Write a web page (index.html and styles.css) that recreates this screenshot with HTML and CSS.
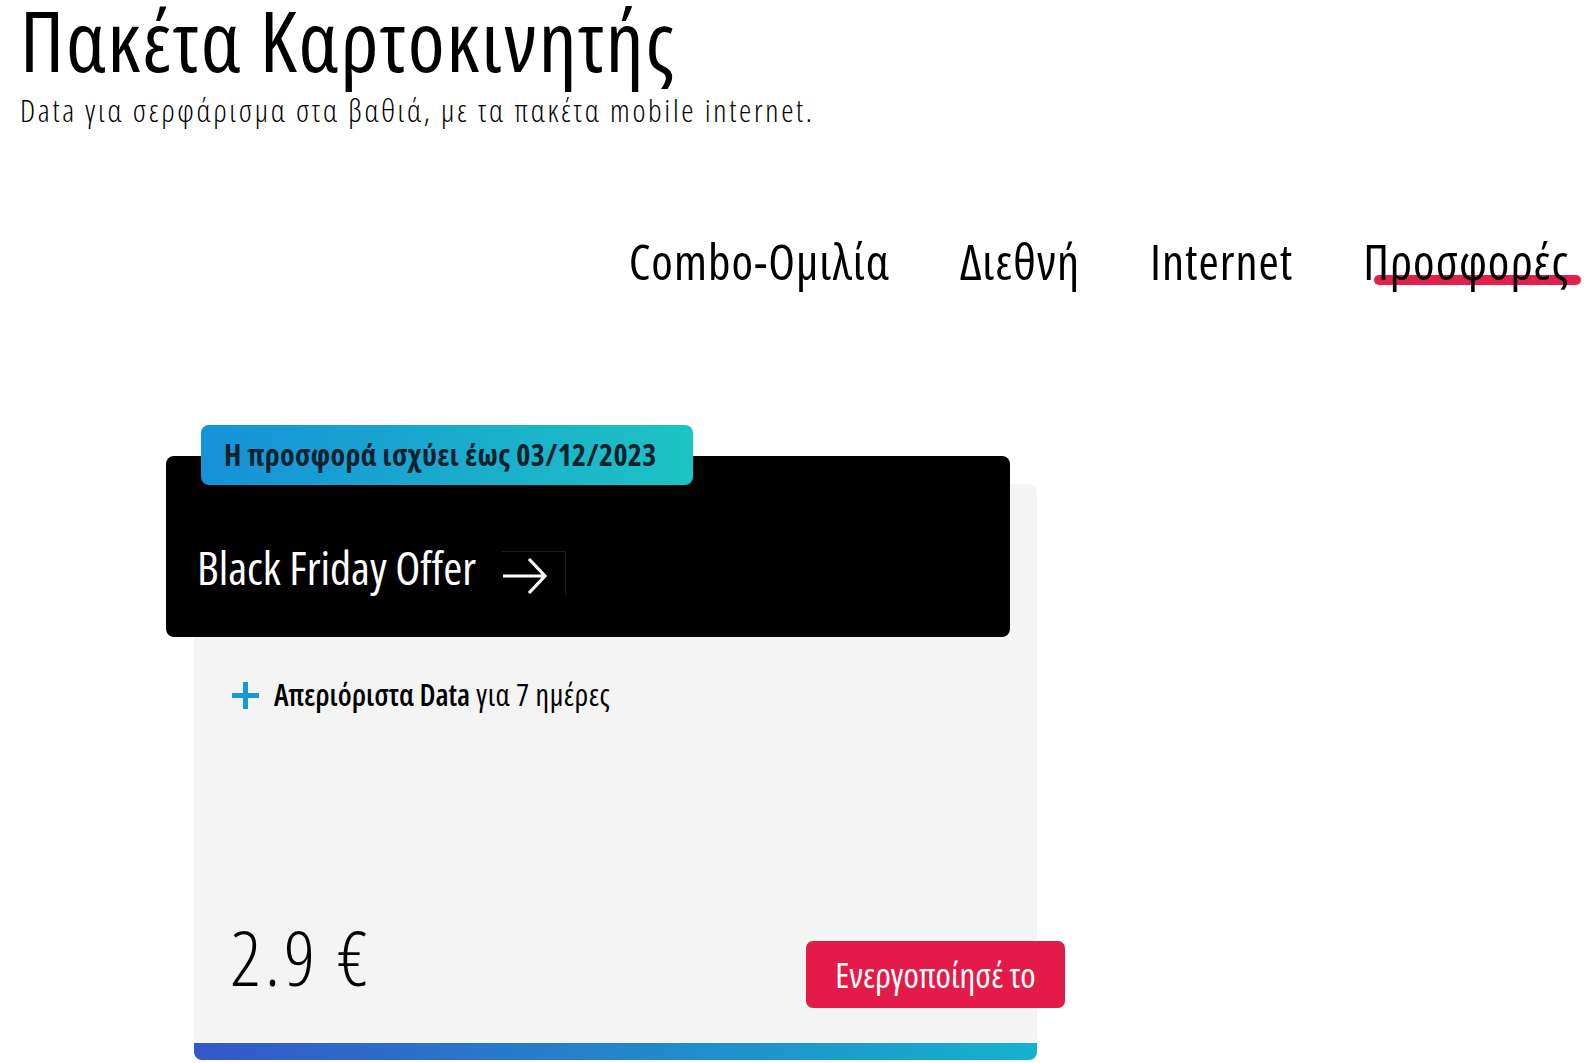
FILE: index.html
```html
<!DOCTYPE html>
<html lang="el">
<head>
<meta charset="utf-8">
<title>Πακέτα Καρτοκινητής</title>
<link rel="stylesheet" href="styles.css">
</head>
<body>
<header class="intro">
  <h1 class="title">Πακέτα Καρτοκινητής</h1>
  <p class="subtitle">Data για σερφάρισμα στα βαθιά, με τα πακέτα mobile internet.</p>
</header>
<nav class="tabs">
  <a class="tab">Combo-Ομιλία</a>
  <a class="tab">Διεθνή</a>
  <a class="tab">Internet</a>
  <a class="tab tab-active">Προσφορές</a>
</nav>
<section class="offers">
  <article class="card">
    <div class="badge">Η προσφορά ισχύει έως 03/12/2023</div>
    <div class="card-head">
      <span class="card-title">Black Friday Offer</span>
      <span class="arrow-box">
        <svg class="arrow" width="46" height="38" viewBox="0 0 46 38"><path d="M1 19 H43 M27 2 L43 19 L27 36" fill="none" stroke="#fff" stroke-width="3.2"/></svg>
      </span>
    </div>
    <ul class="features">
      <li class="feature"><span class="plus"></span><b>Απεριόριστα Data</b><span class="feature-rest"> για 7 ημέρες</span></li>
    </ul>
    <div class="card-foot">
      <span class="price">2.9 €</span>
      <a class="btn">Ενεργοποίησέ το</a>
    </div>
    <div class="card-bar"></div>
  </article>
</section>
</body>
</html>
```
FILE: styles.css
```css
* { box-sizing: border-box; }
body {
  margin: 0;
  background: #fff;
  color: #000;
  font-family: "Open Sans", "Roboto", sans-serif;
  font-stretch: 75%;
}
.intro { padding: 0 0 0 20px; }
.title {
  margin: 0;
  font-size: 84px;
  line-height: 80px;
  font-weight: 400;
  letter-spacing: 1.9px;
  white-space: nowrap;
}
.subtitle {
  margin: 13px 0 0;
  font-size: 31px;
  line-height: 35px;
  font-weight: 300;
  letter-spacing: 2.7px;
  white-space: nowrap;
}
.tabs {
  display: flex;
  justify-content: flex-end;
  gap: 70px;
  padding-right: 22px;
  margin-top: 109px;
}
.tab {
  position: relative;
  font-size: 49px;
  line-height: 49px;
  font-weight: 500;
  letter-spacing: 1px;
  color: #000;
}
.tab-active { z-index: 0; }
.tab-active::after {
  content: "";
  position: absolute;
  left: 11px;
  right: -12px;
  top: 38px;
  height: 10px;
  border-radius: 5px;
  background: #e2214b;
  z-index: -1;
}
.offers { padding-left: 194px; margin-top: 198px; }
.card {
  position: relative;
  width: 843px;
  height: 576px;
  background: #f4f4f4;
  border-radius: 8px;
  display: flex;
  flex-direction: column;
}
.badge {
  position: absolute;
  left: 7px;
  top: -59px;
  width: 492px;
  height: 60px;
  border-radius: 8px;
  background: linear-gradient(90deg, #1591d8, #1dc4c3);
  color: #13202e;
  font-weight: 700;
  font-size: 30px;
  line-height: 60px;
  letter-spacing: 0.35px;
  padding-left: 23px;
  white-space: nowrap;
  z-index: 2;
}
.card-head {
  margin: -28px 27px 0 -28px;
  height: 181px;
  background: #000;
  border-radius: 8px;
  padding: 88px 0 0 31px;
  display: flex;
  align-items: flex-start;
}
.card-title {
  color: #fff;
  font-size: 46px;
  line-height: 46px;
}
.arrow-box {
  margin: 7px 0 0 26px;
  width: 64px;
  height: 45px;
  border-top: 1px solid #1c1c1c;
  border-right: 1px solid #1c1c1c;
  display: flex;
  align-items: center;
  padding: 3px 0 0 0;
}
.features { list-style: none; margin: 40px 0 0; padding: 0 0 0 38px; }
.feature {
  display: flex;
  align-items: center;
  font-size: 30px;
  line-height: 36px;
  white-space: pre;
}
.feature b { font-weight: 600; }
.feature-rest { letter-spacing: 0.5px; }
.plus {
  position: relative;
  width: 27px;
  height: 27px;
  margin-right: 15px;
}
.plus::before, .plus::after {
  content: "";
  position: absolute;
  background: #1a98d5;
}
.plus::before { left: 0; right: 0; top: 11px; height: 5px; }
.plus::after { top: 0; bottom: 0; left: 11px; width: 5px; }
.card-foot {
  margin-top: auto;
  display: flex;
  align-items: flex-start;
  justify-content: space-between;
  padding: 0 0 35px 36px;
  margin-right: -28px;
}
.price {
  font-size: 76px;
  line-height: 78px;
  font-weight: 300;
  letter-spacing: 4px;
}
.btn {
  margin-top: 23px;
  width: 259px;
  height: 67px;
  border-radius: 7px;
  background: #e41b48;
  color: #fff;
  font-size: 35px;
  white-space: nowrap;
  display: flex;
  align-items: center;
  justify-content: center;
}
.card-bar {
  height: 17px;
  border-radius: 0 0 8px 8px;
  background: linear-gradient(90deg, #3457c9, #14b2cd);
}
```
